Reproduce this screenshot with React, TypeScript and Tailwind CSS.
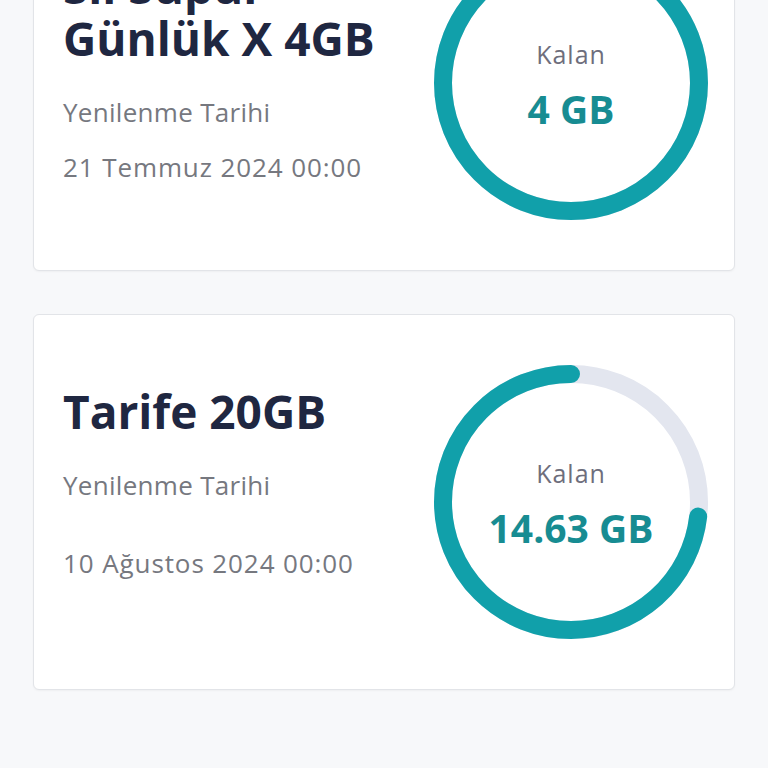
import React from "react";

const FONT = { fontFamily: "'Open Sans', 'Noto Sans', sans-serif" };

function Ring({ pct, value }: { pct: number; value: string }) {
  const r = 128;
  const C = 2 * Math.PI * r;
  const len = C * pct;
  return (
    <div className="relative w-[274px] h-[274px] shrink-0">
      <svg width="274" height="274" viewBox="0 0 274 274" className="absolute inset-0">
        <circle cx="137" cy="137" r={r} fill="none" stroke="#e3e6ef" strokeWidth="18" />
        <g transform="matrix(-1 0 0 1 274 0)">
          <circle
            cx="137"
            cy="137"
            r={r}
            fill="none"
            stroke="#11a0aa"
            strokeWidth="18"
            strokeLinecap={pct >= 1 ? "butt" : "round"}
            strokeDasharray={`${len} ${C}`}
            transform="rotate(-90 137 137)"
          />
        </g>
      </svg>
      <div className="absolute inset-0 flex flex-col items-center justify-center">
        <div className="text-[25px] leading-[32px] tracking-[1px] text-[#6e6e7c]">Kalan</div>
        <div className="mt-[19px] text-[39px] leading-[40px] font-bold text-[#178c92]">{value}</div>
      </div>
    </div>
  );
}

export default function App() {
  return (
    <div className="min-h-[768px] w-[768px] bg-[#f7f8fa] overflow-hidden" style={FONT}>
      <div className="-mt-[105px] flex flex-col gap-[43px] px-[33px]">
        <div className="flex items-start justify-between bg-white border-[1.5px] border-[#e2e4e8] rounded-md h-[376px] pl-[29px] pr-[26px] shadow-[0_1px_2px_rgba(0,0,0,0.04)]">
          <div className="flex flex-col pt-[64px]">
            <div className="text-[46px] leading-[52px] font-bold text-[#1f2741]">
              <div>Sil Süpür</div>
              <div>Günlük X 4GB</div>
            </div>
            <div className="mt-[32px] text-[26px] leading-[32px] tracking-[0.3px] text-[#76787f]">Yenilenme Tarihi</div>
            <div className="mt-[23px] text-[26px] leading-[32px] tracking-[0.9px] text-[#76787f]">21 Temmuz 2024 00:00</div>
          </div>
          <div className="self-center">
            <Ring pct={1} value="4 GB" />
          </div>
        </div>
        <div className="flex items-start justify-between bg-white border-[1.5px] border-[#e2e4e8] rounded-md h-[376px] pl-[29px] pr-[26px] shadow-[0_1px_2px_rgba(0,0,0,0.04)]">
          <div className="flex flex-col pt-[70px]">
            <div className="text-[46px] leading-[52px] font-bold text-[#1f2741]">Tarife 20GB</div>
            <div className="mt-[32px] text-[26px] leading-[32px] tracking-[0.3px] text-[#76787f]">Yenilenme Tarihi</div>
            <div className="mt-[46px] text-[26px] leading-[32px] tracking-[0.9px] text-[#76787f]">10 Ağustos 2024 00:00</div>
          </div>
          <div className="self-center">
            <Ring pct={14.63 / 20} value="14.63 GB" />
          </div>
        </div>
      </div>
    </div>
  );
}
